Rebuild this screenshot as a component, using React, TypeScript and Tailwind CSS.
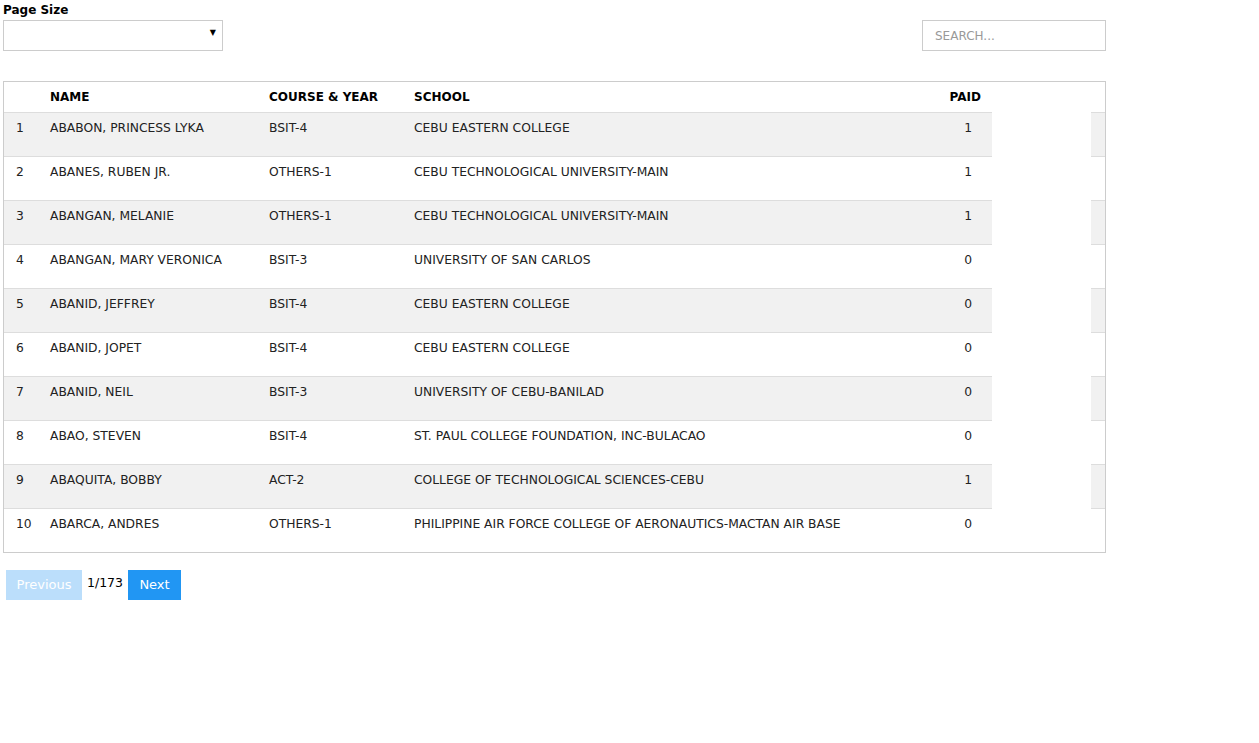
import { useState } from "react";

type Student = {
  id: number;
  name: string;
  course: string;
  school: string;
  paid: number;
};

const students: Student[] = [
  { id: 1, name: "ABABON, PRINCESS LYKA", course: "BSIT-4", school: "CEBU EASTERN COLLEGE", paid: 1 },
  { id: 2, name: "ABANES, RUBEN JR.", course: "OTHERS-1", school: "CEBU TECHNOLOGICAL UNIVERSITY-MAIN", paid: 1 },
  { id: 3, name: "ABANGAN, MELANIE", course: "OTHERS-1", school: "CEBU TECHNOLOGICAL UNIVERSITY-MAIN", paid: 1 },
  { id: 4, name: "ABANGAN, MARY VERONICA", course: "BSIT-3", school: "UNIVERSITY OF SAN CARLOS", paid: 0 },
  { id: 5, name: "ABANID, JEFFREY", course: "BSIT-4", school: "CEBU EASTERN COLLEGE", paid: 0 },
  { id: 6, name: "ABANID, JOPET", course: "BSIT-4", school: "CEBU EASTERN COLLEGE", paid: 0 },
  { id: 7, name: "ABANID, NEIL", course: "BSIT-3", school: "UNIVERSITY OF CEBU-BANILAD", paid: 0 },
  { id: 8, name: "ABAO, STEVEN", course: "BSIT-4", school: "ST. PAUL COLLEGE FOUNDATION, INC-BULACAO", paid: 0 },
  { id: 9, name: "ABAQUITA, BOBBY", course: "ACT-2", school: "COLLEGE OF TECHNOLOGICAL SCIENCES-CEBU", paid: 1 },
  { id: 10, name: "ABARCA, ANDRES", course: "OTHERS-1", school: "PHILIPPINE AIR FORCE COLLEGE OF AERONAUTICS-MACTAN AIR BASE", paid: 0 },
];

export default function App() {
  const [search, setSearch] = useState("");

  return (
    <div className="min-h-screen bg-white px-[3px] pt-[2px] font-['DejaVu_Sans',Verdana,sans-serif] text-[12.3px] text-[#222]">
      {/* Toolbar */}
      <div className="w-[1103px]">
        <div className="text-[12px] font-bold leading-[17px] text-black">Page Size</div>
        <div className="mt-[1px] flex items-start justify-between">
          <div className="relative h-[31px] w-[220px] border border-[#ccc] bg-white">
            <span className="absolute right-[6px] top-[8px] text-[8px] leading-none text-black">▼</span>
          </div>
          <input
            value={search}
            onChange={(e) => setSearch(e.target.value)}
            placeholder="SEARCH..."
            className="h-[31px] w-[184px] border border-[#ccc] px-[12px] text-[12px] outline-none placeholder:text-[#999]"
          />
        </div>
      </div>

      {/* Table */}
      <div className="mt-[30px] flex w-[1103px] justify-between border border-[#ccc]">
        <table className="w-[988px] table-fixed border-collapse">
          <colgroup>
            <col className="w-[34px]" />
            <col className="w-[219px]" />
            <col className="w-[145px]" />
            <col className="w-[480px]" />
            <col />
          </colgroup>
          <thead>
            <tr className="h-[30px] text-left text-[12px] font-bold text-black">
              <th className="pl-[12px]"></th>
              <th className="pl-[12px]">NAME</th>
              <th className="pl-[12px]">COURSE &amp; YEAR</th>
              <th className="pl-[12px]">SCHOOL</th>
              <th className="pr-[11px] text-right">PAID</th>
            </tr>
          </thead>
          <tbody>
            {students.map((s, i) => (
              <tr
                key={s.id}
                className={`h-[44px] border-t border-[#ddd] align-top ${i % 2 === 0 ? "bg-[#f1f1f1]" : "bg-white"}`}
              >
                <td className="pl-[12px] pt-[6px]">{s.id}</td>
                <td className="pl-[12px] pt-[6px]">{s.name}</td>
                <td className="pl-[12px] pt-[6px]">{s.course}</td>
                <td className="whitespace-nowrap pl-[12px] pt-[6px]">{s.school}</td>
                <td className="pr-[20px] pt-[6px] text-right">{s.paid}</td>
              </tr>
            ))}
          </tbody>
        </table>

        {/* right strip */}
        <div className="w-[14px]">
          <div className="h-[30px]" />
          {students.map((s, i) => (
            <div
              key={s.id}
              className={`h-[44px] border-t border-[#ddd] ${i % 2 === 0 ? "bg-[#f1f1f1]" : "bg-white"}`}
            />
          ))}
        </div>
      </div>

      {/* Pagination */}
      <div className="mt-[17px] flex items-center pl-[3px]">
        <button className="h-[30px] w-[76px] bg-[#bbdefb] text-[13px] text-white">Previous</button>
        <span className="mx-[5px] -mt-[3px] text-[12.5px] text-black">1/173</span>
        <button className="h-[30px] w-[53px] bg-[#2196f3] text-[13px] text-white">Next</button>
      </div>
    </div>
  );
}
